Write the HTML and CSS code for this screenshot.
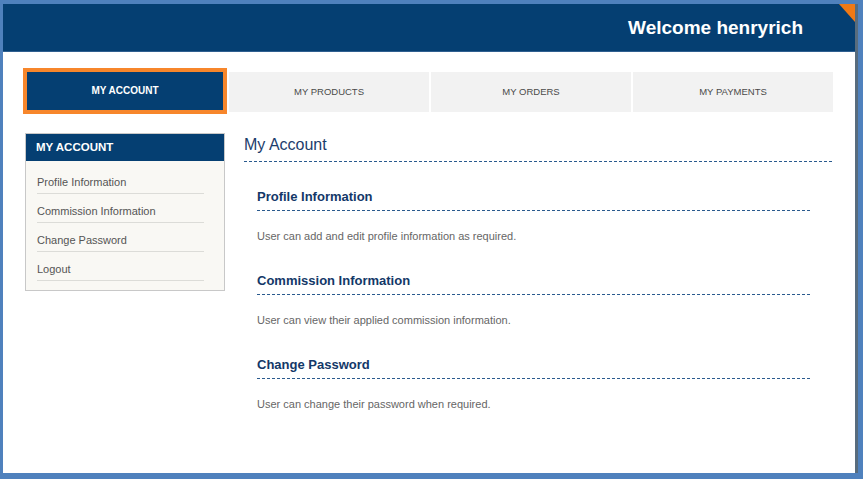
FILE: index.html
```html
<!DOCTYPE html>
<html lang="en">
<head>
    <meta charset="UTF-8">
    <meta name="viewport" content="width=device-width, initial-scale=1.0">
    <title>My Account</title>
    <link rel="stylesheet" href="styles.css">
</head>
<body>
    <div class="frame">
        <header class="top-bar">
            <h1>Welcome henryrich</h1>
            <span class="corner"></span>
        </header>
        <div class="content">
            <nav class="tabs">
                <a href="#" class="tab active">MY ACCOUNT</a>
                <a href="#" class="tab">MY PRODUCTS</a>
                <a href="#" class="tab">MY ORDERS</a>
                <a href="#" class="tab">MY PAYMENTS</a>
            </nav>
            <div class="page">
                <aside class="sidebar">
                    <div class="sidebar-title">MY ACCOUNT</div>
                    <ul class="side-links">
                        <li><a href="#">Profile Information</a></li>
                        <li><a href="#">Commission Information</a></li>
                        <li><a href="#">Change Password</a></li>
                        <li><a href="#">Logout</a></li>
                    </ul>
                </aside>
                <main class="main">
                    <h2 class="page-title">My Account</h2>
                    <section class="item">
                        <h3>Profile Information</h3>
                        <p>User can add and edit profile information as required.</p>
                    </section>
                    <section class="item">
                        <h3>Commission Information</h3>
                        <p>User can view their applied commission information.</p>
                    </section>
                    <section class="item">
                        <h3>Change Password</h3>
                        <p>User can change their password when required.</p>
                    </section>
                </main>
            </div>
        </div>
    </div>
</body>
</html>
```
FILE: styles.css
```css
html, body {
    height: 100%;
}

body {
    margin: 0;
    background-color: #4f81bd;
    font-family: "Liberation Sans", Arial, sans-serif;
}

.frame {
    box-sizing: border-box;
    height: calc(100% - 10px);
    margin: 4px 5px 6px 3px;
    background-color: #fff;
    border-right: 3px solid #586c7d;
    display: flex;
    flex-direction: column;
}

.top-bar {
    position: relative;
    height: 47px;
    background-color: #053f72;
    border-bottom: 1px solid #2f5f90;
    display: flex;
    align-items: center;
    justify-content: flex-end;
    padding-right: 52px;
}

.top-bar h1 {
    margin: 0;
    color: #fff;
    font-size: 19px;
    font-weight: bold;
}

.corner {
    position: absolute;
    top: 0;
    right: 0;
    width: 0;
    height: 0;
    border-top: 18px solid #f07915;
    border-left: 16px solid transparent;
}

.content {
    padding: 20px 22px 0 20px;
}

.tabs {
    display: flex;
    gap: 2px;
    height: 40px;
}

.tab {
    flex: 1;
    display: flex;
    align-items: center;
    justify-content: center;
    padding-bottom: 1px;
    background-color: #f2f2f2;
    color: #4a4a4a;
    font-size: 9.5px;
    text-decoration: none;
}

.tab.active {
    flex: 0 0 204px;
    box-sizing: border-box;
    height: 46px;
    margin-top: -4px;
    border: 4px solid #f7862b;
    background-color: #053f72;
    color: #fff;
    font-size: 10px;
    font-weight: bold;
}

.page {
    display: flex;
    gap: 19px;
    margin-top: 21px;
    padding-left: 2px;
}

.sidebar {
    flex: 0 0 200px;
    box-sizing: border-box;
    align-self: flex-start;
    border: 1px solid #c8c8c8;
    background-color: #f9f8f4;
}

.sidebar-title {
    height: 27px;
    line-height: 27px;
    padding-left: 10px;
    background-color: #053f72;
    color: #fff;
    font-size: 11.5px;
    font-weight: bold;
}

.side-links {
    list-style: none;
    margin: 0;
    padding: 4px 0 9px;
}

.side-links li {
    margin: 0 20px 0 11px;
    padding: 10px 0 4px;
    font-size: 11px;
    line-height: 14px;
    border-bottom: 1px solid #dcdcd8;
}

.side-links a {
    color: #555;
    text-decoration: none;
}

.main {
    flex: 1;
}

.page-title,
.item h3 {
    background: linear-gradient(to right, #2a5a8e 3px, transparent 3px) left bottom / 5px 1px repeat-x;
}

.page-title {
    margin: 0;
    padding: 2px 0 7px;
    line-height: 20px;
    color: #1c3d6c;
    font-size: 16px;
    font-weight: normal;
}

.item {
    margin: 26px 22px 0 13px;
}

.item + .item {
    margin-top: 29px;
}

.item h3 {
    margin: 0;
    padding: 1px 0 6px;
    line-height: 16px;
    color: #133868;
    font-size: 13px;
    font-weight: bold;
}

.item p {
    margin: 18px 0 0;
    line-height: 14px;
    color: #666;
    font-size: 11px;
}
```
